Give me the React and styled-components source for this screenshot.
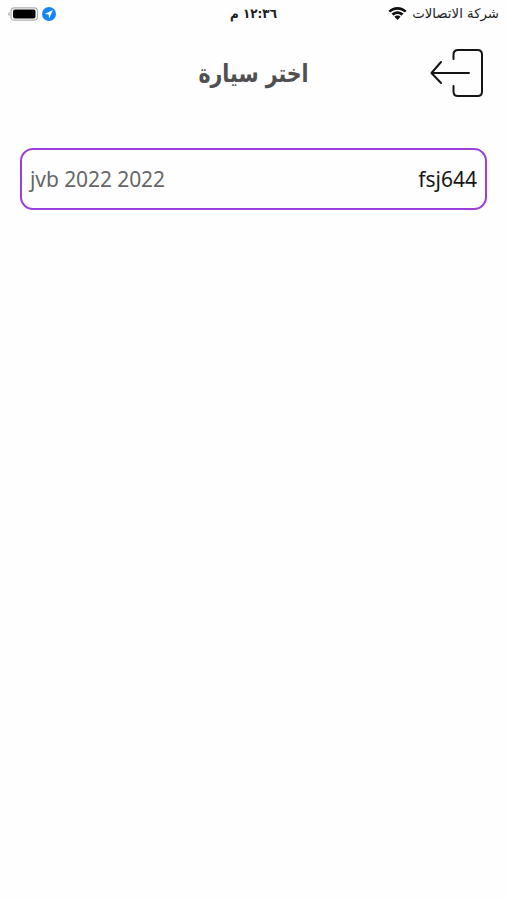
import React from 'react';
import styled, { createGlobalStyle } from 'styled-components';

const GlobalStyle = createGlobalStyle`
  body {
    margin: 0;
    background: #fefefe;
  }
`;

const Screen = styled.div`
  direction: rtl;
  width: 100%;
  height: 900px;
  overflow: hidden;
  font-family: 'Noto Sans', 'DejaVu Sans', sans-serif;
  color: #1c1c1e;
`;

const StatusBar = styled.div`
  display: grid;
  grid-template-columns: 1fr auto 1fr;
  align-items: center;
  height: 27px;
  padding: 0 8px;
`;

const StatusGroup = styled.div`
  display: flex;
  align-items: center;
  justify-content: ${(props) => (props.$end ? 'flex-end' : 'flex-start')};
  gap: ${(props) => (props.$end ? '3px' : '5px')};
`;

const StatusText = styled.span`
  font-family: 'DejaVu Sans', sans-serif;
  font-size: 13.3px;
  line-height: 20px;
  white-space: nowrap;
`;

const Clock = styled(StatusText)`
  font-size: 13px;
  font-weight: 700;
  transform: scaleX(0.92);
`;

const Header = styled.header`
  display: grid;
  grid-template-columns: 54px 1fr 54px;
  align-items: center;
  height: 92px;
  padding: 0 23px;
`;

const Title = styled.h1`
  margin: 0;
  padding-top: 1px;
  text-align: center;
  font-family: 'DejaVu Sans', sans-serif;
  font-size: 25px;
  line-height: 36px;
  font-weight: 700;
  color: #505052;
  transform: scaleX(0.82);
`;

const BackButton = styled.button`
  display: flex;
  padding: 0;
  border: 0;
  background: none;
`;

const CarList = styled.div`
  padding: 29px 20px 0;
`;

const CarCard = styled.div`
  display: flex;
  align-items: center;
  justify-content: space-between;
  box-sizing: border-box;
  height: 62px;
  padding: 0 8px;
  border: 2px solid #9a3fd9;
  border-radius: 13px;
`;

const Plate = styled.span`
  direction: ltr;
  font-size: 21px;
  line-height: 30px;
  color: #161616;
`;

const Model = styled(Plate)`
  letter-spacing: -0.08px;
  color: #666;
`;

const WifiIcon = () => (
  <svg width="19" height="14" viewBox="0 0 19 14" fill="#111">
    <path d="M9.5 0C6 0 2.8 1.4.4 3.7l1.8 1.9C4.1 3.8 6.7 2.7 9.5 2.7s5.4 1.1 7.3 2.9l1.8-1.9C16.2 1.4 13 0 9.5 0z" />
    <path d="M9.5 4.2c-2.3 0-4.4.9-6 2.4l2.1 2.2c1-1 2.4-1.7 3.9-1.7s2.9.7 3.9 1.7l2.1-2.2c-1.6-1.5-3.7-2.4-6-2.4z" />
    <path d="M9.5 8.5c-1.2 0-2.3.5-3.1 1.3l3.1 3.2 3.1-3.2c-.8-.8-1.9-1.3-3.1-1.3z" />
  </svg>
);

const LocationIcon = () => (
  <svg width="14" height="14" viewBox="0 0 14 14">
    <circle cx="7" cy="7" r="7" fill="#1683f5" />
    <path d="M11 3 2.6 6.9l4 .5.5 4z" fill="#fff" />
  </svg>
);

const BatteryIcon = () => (
  <svg width="31" height="14" viewBox="0 0 31 14">
    <path d="M1.6 4.9v4.2C.7 8.8.2 8 .2 7s.5-1.8 1.4-2.1z" fill="#aaa" />
    <rect x="3" y=".8" width="26.5" height="12.4" rx="3.5" fill="#fff" stroke="#b0b0b0" strokeWidth="1.2" />
    <rect x="5" y="2.6" width="22.5" height="8.8" rx="2" fill="#000" />
  </svg>
);

const ExitIcon = () => (
  <svg width="54" height="50" viewBox="0 0 54 50" fill="none" stroke="#151515" strokeWidth="2" strokeLinecap="round" strokeLinejoin="round">
    <path d="M23.5 11V6.5Q23.5 2 28 2H47.5q4.500 0 4.500 4.500v37Q52 48 47.5 48H28Q23.5 48 23.5 43.5V38" />
    <path d="M39 25H2M11 14 1.5 25 11 35" />
  </svg>
);

const App = () => (
  <Screen>
    <GlobalStyle />
    <StatusBar>
      <StatusGroup>
        <StatusText>شركة الاتصالات</StatusText>
        <WifiIcon />
      </StatusGroup>
      <Clock>١٢:٣٦ م</Clock>
      <StatusGroup $end>
        <LocationIcon />
        <BatteryIcon />
      </StatusGroup>
    </StatusBar>
    <Header>
      <BackButton aria-label="رجوع">
        <ExitIcon />
      </BackButton>
      <Title>اختر سيارة</Title>
    </Header>
    <CarList>
      <CarCard>
        <Plate>fsj644</Plate>
        <Model>jvb 2022 2022</Model>
      </CarCard>
    </CarList>
  </Screen>
);

export default App;
